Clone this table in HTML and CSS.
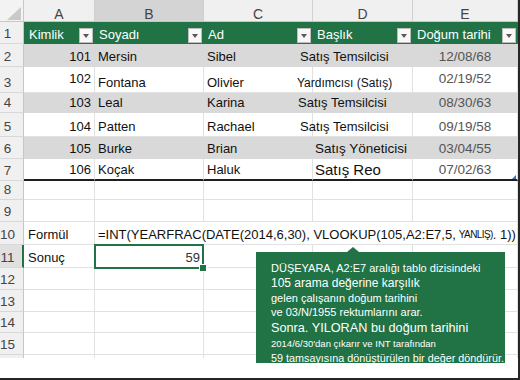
FILE: index.html
```html
<!DOCTYPE html>
<html lang="tr">
<head>
<meta charset="utf-8">
<title>Tablo</title>
<link rel="stylesheet" href="styles.css">
</head>
<body>
<div class="frame">
  <div class="sheet">
    <div class="corner"><span class="tri"></span></div>
    <div class="ch">A</div><div class="ch sel">B</div><div class="ch">C</div><div class="ch">D</div><div class="ch">E</div>

    <div class="rh">1</div>
    <div class="h first"><span class="lbl">Kimlik</span><span class="dd"></span></div>
    <div class="h"><span class="lbl">Soyadı</span><span class="dd"></span></div>
    <div class="h"><span class="lbl">Ad</span><span class="dd"></span></div>
    <div class="h"><span class="lbl">Başlık</span><span class="dd"></span></div>
    <div class="h"><span class="lbl">Doğum tarihi</span><span class="dd"></span></div>

    <div class="rh">2</div>
    <div class="c g num">101</div><div class="c g">Mersin</div><div class="c g">Sibel</div>
    <div class="c g d"><span class="sh13">Satış Temsilcisi</span></div><div class="c g date">12/08/68</div>

    <div class="rh">3</div>
    <div class="c num up">102</div><div class="c">Fontana</div><div class="c">Olivier</div>
    <div class="c d"><span class="sh16 small">Yardımcısı (Satış)</span></div><div class="c date up">02/19/52</div>

    <div class="rh">4</div>
    <div class="c g num">103</div><div class="c g">Leal</div><div class="c g">Karina</div>
    <div class="c g d"><span class="sh15">Satış Temsilcisi</span></div><div class="c g date">08/30/63</div>

    <div class="rh">5</div>
    <div class="c num">104</div><div class="c">Patten</div><div class="c">Rachael</div>
    <div class="c d"><span class="sh13">Satış Temsilcisi</span></div><div class="c date">09/19/58</div>

    <div class="rh">6</div>
    <div class="c g num">105</div><div class="c g">Burke</div><div class="c g">Brian</div>
    <div class="c g d"><span class="sh2 mid">Satış Yöneticisi</span></div><div class="c g date">03/04/55</div>

    <div class="rh">7</div>
    <div class="c bot num">106</div><div class="c bot">Koçak</div><div class="c bot">Haluk</div>
    <div class="c bot d"><span class="sh2 big">Satış Reo</span></div><div class="c bot date e7">07/02/63</div>

    <div class="rh">8</div>
    <div class="c"></div><div class="c"></div><div class="c"></div><div class="c"></div><div class="c"></div>

    <div class="rh">9</div>
    <div class="c"></div><div class="c"></div><div class="c"></div><div class="c"></div><div class="c"></div>

    <div class="rh">10</div>
    <div class="c lab">Formül</div>
    <div class="c formula">=INT(YEARFRAC(DATE(2014,6,30), VLOOKUP(105,A2:E7,5, <span class="yl">YANLIŞ)</span>. 1))</div>

    <div class="rh sel">11</div>
    <div class="c lab">Sonuç</div><div class="c selcell">59</div><div class="c"></div><div class="c"></div><div class="c"></div>

    <div class="rh">12</div>
    <div class="c"></div><div class="c"></div><div class="c"></div><div class="c"></div><div class="c"></div>

    <div class="rh">13</div>
    <div class="c"></div><div class="c"></div><div class="c"></div><div class="c"></div><div class="c"></div>

    <div class="rh">14</div>
    <div class="c"></div><div class="c"></div><div class="c"></div><div class="c"></div><div class="c"></div>

    <div class="rh">15</div>
    <div class="c"></div><div class="c"></div><div class="c"></div><div class="c"></div><div class="c"></div>

    <div class="rh stub"></div>
    <div class="c stub"></div><div class="c stub"></div><div class="c stub"></div><div class="c stub"></div><div class="c stub"></div>
  </div>

  <div class="callout">
    <div class="l1">DÜŞEYARA, A2:E7 aralığı tablo dizisindeki</div>
    <div class="l2">105 arama değerine karşılık</div>
    <div class="l3">gelen çalışanın doğum tarihini</div>
    <div class="l4">ve 03/N/1955 rektumlarını arar.</div>
    <div class="l5">Sonra. YILORAN bu doğum tarihini</div>
    <div class="l6">2014/6/30'dan çıkarır ve INT tarafından</div>
    <div class="l7">59 tamsayısına dönüştürülen bir değer döndürür.</div>
  </div>
</div>
</body>
</html>
```

FILE: styles.css
```css
* { box-sizing: border-box; }

body {
  margin: 0;
  background: #fff;
  font-family: "Liberation Sans", Arial, sans-serif;
}

.frame {
  position: relative;
  width: 520px;
  height: 380px;
  border-right: 2px solid #262626;
  border-bottom: 2px solid #262626;
  overflow: hidden;
  background: #fff;
}

.sheet {
  display: grid;
  grid-template-columns: 24px 71px 109px 109px 100px 105px;
  grid-template-rows: 22px 22px 23px 26px 20px 24px 22px 22px 19px 22px 23px 23px 22px 22px 21px 22px 3px;
}

/* corner */
.corner {
  background: #f3f3f3;
  border-right: 1px solid #c8c8c8;
  border-bottom: 1px solid #c8c8c8;
  display: flex;
  align-items: flex-end;
  justify-content: flex-end;
  padding: 0 2px 1px 0;
}
.tri {
  width: 0;
  height: 0;
  border-left: 14px solid transparent;
  border-bottom: 13px solid #c9c9c9;
}

/* column headers */
.ch {
  background: #f0f0f0;
  border-right: 1px solid #d0d0d0;
  border-bottom: 1px solid #c6c6c6;
  display: flex;
  align-items: flex-end;
  justify-content: center;
  font-size: 14px;
  line-height: 14px;
  color: #444;
}
.ch.sel { background: #d4d4d4; }

/* row headers */
.rh {
  background: #f0f0f0;
  border-right: 1px solid #c6c6c6;
  border-bottom: 1px solid #d8d8d8;
  display: flex;
  align-items: flex-end;
  justify-content: center;
  padding-right: 8px;
  font-size: 13.5px;
  line-height: 18px;
  color: #444;
  white-space: nowrap;
}
.rh.sel {
  background: #e0e0e0;
  border-right: 2px solid #217346;
  padding-right: 7px;
}
.rh.stub { border-bottom: 0; }

/* cells */
.c {
  border-right: 1px solid #e1e1e1;
  border-bottom: 1px solid #e1e1e1;
  display: flex;
  align-items: flex-end;
  padding: 0 3px;
  font-size: 13px;
  line-height: 18px;
  color: #111;
  white-space: nowrap;
  min-width: 0;
}
.c.stub { border-bottom: 0; }
.g {
  background: #d9d9d9;
  border-right-color: #d9d9d9;
  border-bottom-color: #d9d9d9;
}
.num { justify-content: flex-end; }
.date {
  justify-content: center;
  color: #555;
  font-size: 13.5px;
}
.up { padding-bottom: 4px; }
.d { padding: 0; }
.sh13 { margin-left: -13px; }
.sh15 { margin-left: -15px; }
.sh16 { margin-left: -16px; }
.sh2 { margin-left: 2px; }
.small { font-size: 12px; }
.mid { font-size: 13.5px; }
.big { font-size: 15px; }
.lab { padding-left: 4px; }

/* table header row */
.h {
  background: #217346;
  color: #fff;
  display: flex;
  align-items: flex-end;
  padding: 0 2px 0 4px;
  font-size: 13px;
  line-height: 18px;
  white-space: nowrap;
}
.h.first { padding-left: 5px; }
.h .lbl { flex: 1; }
.dd {
  width: 14px;
  height: 15px;
  margin-bottom: 1px;
  background: #f8f8f8;
  border: 1px solid #bdbdbd;
  display: flex;
  align-items: center;
  justify-content: center;
}
.dd::after {
  content: "";
  border-left: 3.5px solid transparent;
  border-right: 3.5px solid transparent;
  border-top: 4px solid #595959;
}

.bot { border-bottom: 2px solid #1e1e1e; }
.e7 { position: relative; }
.e7::after {
  content: "";
  position: absolute;
  right: 1px;
  bottom: 0;
  border-left: 4px solid transparent;
  border-bottom: 4px solid #3c6fb4;
}

.formula {
  grid-column: span 4;
  border-right-color: #e1e1e1;
}
.formula .yl {
  font-size: 10px;
  letter-spacing: -0.6px;
  margin-left: 3px;
}

.selcell {
  position: relative;
  z-index: 2;
  justify-content: flex-end;
  color: #333;
}
.selcell::before {
  content: "";
  position: absolute;
  top: -1px;
  left: -1px;
  right: -1px;
  bottom: -2px;
  border: 2px solid #217346;
}
.selcell::after {
  content: "";
  position: absolute;
  right: -4px;
  bottom: -5px;
  width: 6px;
  height: 6px;
  background: #217346;
  border: 1px solid #fff;
}

/* callout */
.callout {
  position: absolute;
  left: 256px;
  top: 252px;
  width: 249px;
  height: 111px;
  background: #217346;
  color: #fff;
  padding: 8px 0 0 15px;
  white-space: nowrap;
  z-index: 5;
}
.callout::before {
  content: "";
  position: absolute;
  top: -5px;
  left: 91px;
  border-left: 6px solid transparent;
  border-right: 6px solid transparent;
  border-bottom: 5px solid #217346;
}
.l1 { font-size: 11px; line-height: 16px; }
.l2 { font-size: 12px; line-height: 15px; }
.l3 { font-size: 11px; line-height: 14px; }
.l4 { font-size: 11px; line-height: 15px; }
.l5 { font-size: 12.7px; line-height: 16px; }
.l6 { font-size: 9.5px; line-height: 15px; }
.l7 { font-size: 10.8px; line-height: 14px; }
```
